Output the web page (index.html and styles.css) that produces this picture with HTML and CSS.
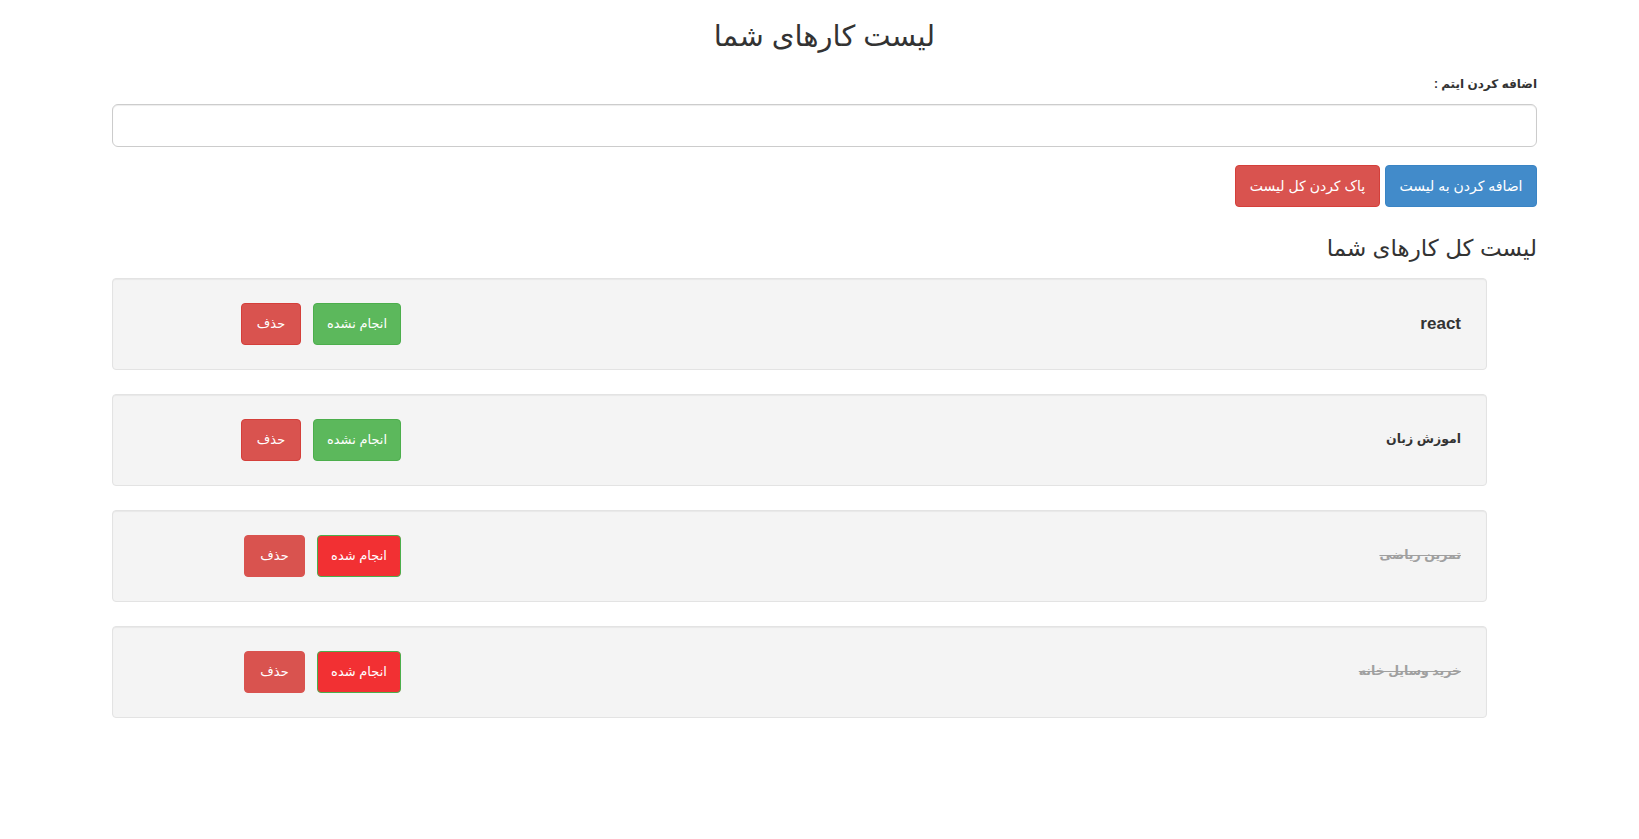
FILE: index.html
```html
<!DOCTYPE html>
<html lang="fa" dir="rtl">
<head>
<meta charset="utf-8">
<title>لیست کارهای شما</title>
<link rel="stylesheet" href="styles.css">
</head>
<body>
<div class="container">
  <h2 class="title">لیست کارهای شما</h2>
  <label class="field-label" for="item">اضافه کردن ایتم :</label>
  <input class="field" id="item" type="text">
  <div class="toolbar">
    <button class="btn btn-primary btn-add">اضافه کردن به لیست</button>
    <button class="btn btn-danger btn-clear">پاک کردن کل لیست</button>
  </div>
  <h3 class="subtitle">لیست کل کارهای شما</h3>
  <div class="list">
    <div class="well">
      <div class="task">react</div>
      <div class="actions">
        <button class="btn btn-success btn-toggle">انجام نشده</button>
        <button class="btn btn-danger btn-del">حذف</button>
      </div>
    </div>
    <div class="well">
      <div class="task fa">اموزش زبان</div>
      <div class="actions">
        <button class="btn btn-success btn-toggle">انجام نشده</button>
        <button class="btn btn-danger btn-del">حذف</button>
      </div>
    </div>
    <div class="well">
      <div class="task fa done">تمرین ریاضی</div>
      <div class="actions">
        <button class="btn btn-done">انجام شده</button>
        <button class="btn btn-danger btn-soft">حذف</button>
      </div>
    </div>
    <div class="well">
      <div class="task fa done">خرید وسایل خانه</div>
      <div class="actions">
        <button class="btn btn-done">انجام شده</button>
        <button class="btn btn-danger btn-soft">حذف</button>
      </div>
    </div>
  </div>
</div>
</body>
</html>
```
FILE: styles.css
```css
* { box-sizing: border-box; }
html, body {
  margin: 0;
  background: #fff;
}
body {
  font-family: "Liberation Sans", "DejaVu Sans", Arial, sans-serif;
  font-size: 14px;
  line-height: 1.42857;
  color: #333;
  direction: rtl;
}
.container {
  margin: 0 102px 0 112px;
  display: flex;
  flex-direction: column;
}
.title {
  margin: 20px 0 0;
  font-size: 29px;
  font-weight: 500;
  line-height: 33px;
  text-align: center;
}
.field-label {
  display: block;
  margin-top: 21px;
  height: 20px;
  line-height: 20px;
  font-size: 12px;
  font-weight: bold;
  margin-bottom: 10px;
}
.field {
  display: block;
  width: 100%;
  height: 43px;
  padding: 10px 16px;
  font-size: 18px;
  border: 1px solid #ccc;
  border-radius: 6px;
  box-shadow: inset 0 1px 1px rgba(0,0,0,.075);
  background: #fff;
  font-family: inherit;
}
.toolbar {
  display: flex;
  gap: 5px;
  margin-top: 18px;
}
.btn {
  display: inline-block;
  height: 42px;
  padding: 0;
  font-family: inherit;
  font-size: 13px;
  line-height: 20px;
  text-align: center;
  border: 1px solid transparent;
  border-radius: 4px;
  color: #fff;
  white-space: nowrap;
  cursor: pointer;
}
.btn-add { width: 152px; font-size: 14px; }
.btn-clear { width: 145px; font-size: 14px; }
.btn-toggle { width: 88px; }
.btn-del { width: 60px; }
.btn-primary { background: #428bca; border-color: #3a84c4; }
.btn-danger { background: #d9534f; border-color: #d43f3a; }
.btn-success { background: #5cb85c; border-color: #4cae4c; }
.btn-done { width: 84px; background: #f23033; border-color: #4cae4c; }
.btn-soft { width: 61px; background: #d9534f; border-color: #d9534f; }
.subtitle {
  margin: 28px 0 17px;
  font-size: 23px;
  font-weight: 500;
  line-height: 26px;
}
.list {
  display: flex;
  flex-direction: column;
  gap: 24px;
  width: 1375px;
  align-self: flex-end;
}
.well {
  display: flex;
  align-items: center;
  height: 92px;
  padding-right: 25px;
  background: #f4f4f4;
  border: 1px solid #e3e3e3;
  border-radius: 4px;
  box-shadow: inset 0 1px 1px rgba(0,0,0,.05);
}
.task {
  flex: 1;
  font-size: 17px;
  font-weight: bold;
}
.task.fa {
  font-size: 12.5px;
}
.task.done {
  color: #a0a0a0;
  text-decoration: line-through;
}
.actions {
  display: flex;
  gap: 12px;
  width: 288px;
}
```
